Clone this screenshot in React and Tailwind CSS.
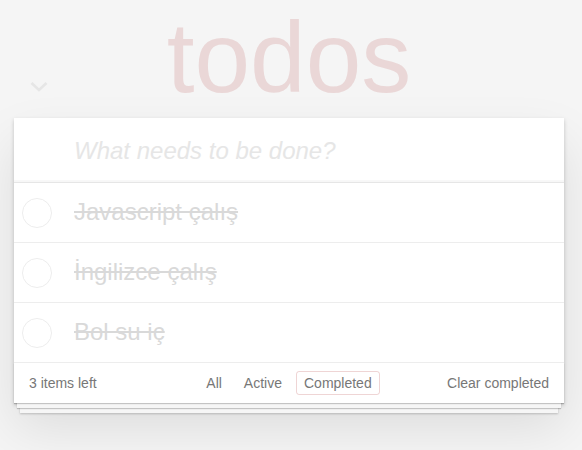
import React from "react";

const todos = [
  { id: 1, title: "Javascript çalış" },
  { id: 2, title: "İngilizce çalış" },
  { id: 3, title: "Bol su iç" },
];

const Circle = () => (
  <svg width="30" height="30" viewBox="0 0 30 30" className="shrink-0">
    <circle cx="15" cy="15" r="14.5" fill="none" stroke="#ededed" strokeWidth="1" />
  </svg>
);

export default function App() {
  return (
    <div className="min-h-[450px] bg-[#f5f5f5] pt-[7px] font-['Liberation_Sans',Arial,sans-serif] text-[14px] text-[#4d4d4d]">
      <div className="ml-[14px] w-[550px]">
        {/* Header */}
        <header className="relative mb-[11px] h-[100px]">
          <h1 className="text-center text-[100px] font-thin leading-[100px] text-[rgba(175,47,47,0.15)]">
            todos
          </h1>
          <svg
            width="18"
            height="12"
            viewBox="0 0 18 12"
            className="absolute left-[16px] top-[74px]"
          >
            <polyline points="1.5,2 9,9 16.5,2" fill="none" stroke="#e6e6e6" strokeWidth="2.6" />
          </svg>
        </header>

        {/* Card */}
        <section className="bg-white shadow-[0_2px_4px_0_rgba(0,0,0,0.2),0_25px_50px_0_rgba(0,0,0,0.1)]">
          <div className="h-[64px] pl-[60px] pr-4 pt-4 text-[24px] italic leading-[33.6px] text-[#e6e6e6] shadow-[inset_0_-2px_1px_rgba(0,0,0,0.03)]">
            What needs to be done?
          </div>

          <ul className="border-t border-[#e6e6e6]">
            {todos.map((t) => (
              <li key={t.id} className="flex h-[60px] items-center border-b border-[#ededed] pl-[8px]">
                <Circle />
                <span className="ml-[22px] text-[24px] leading-[28.8px] text-[#d9d9d9] line-through">
                  {t.title}
                </span>
              </li>
            ))}
          </ul>

          <footer className="grid h-[40px] grid-cols-[1fr_auto_1fr] items-center bg-white px-[15px] text-[#777] shadow-[0_1px_1px_rgba(0,0,0,0.2),0_8px_0_-3px_#f6f6f6,0_9px_1px_-3px_rgba(0,0,0,0.2),0_16px_0_-6px_#f6f6f6,0_17px_2px_-6px_rgba(0,0,0,0.2)]">
            <span className="leading-[20px]">3 items left</span>
            <div className="flex items-center gap-[6px]">
              <span className="rounded-[3px] border border-transparent px-[7px] py-[3px] leading-[16px]">All</span>
              <span className="rounded-[3px] border border-transparent px-[7px] py-[3px] leading-[16px]">Active</span>
              <span className="rounded-[3px] border border-[rgba(175,47,47,0.2)] px-[7px] py-[3px] leading-[16px]">
                Completed
              </span>
            </div>
            <span className="text-right leading-[20px]">Clear completed</span>
          </footer>
        </section>
      </div>
    </div>
  );
}
